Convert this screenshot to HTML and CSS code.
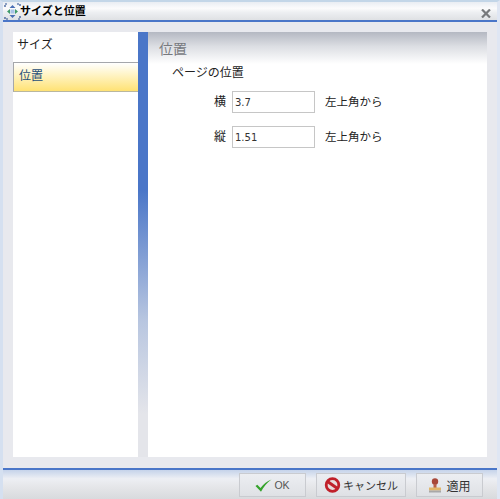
FILE: index.html
```html
<!DOCTYPE html>
<html lang="ja">
<head>
<meta charset="utf-8">
<title>サイズと位置</title>
<link rel="stylesheet" href="styles.css">
</head>
<body>
<div class="dialog">
  <header class="titlebar">
    <svg class="title-icon" width="17" height="17" viewBox="0 0 17 17">
      <path d="M1 4V1h3M13 1h3v3M16 13v3h-3M4 16H1v-3" fill="none" stroke="#2b4f8f" stroke-width="1.200" stroke-dasharray="2 1"/>
      <path d="M8.500 2l3 3h-6zM8.500 15l-3-3h6z" fill="#4a6fb5"/>
      <path d="M3 8.500l3-2.500v5zM14 8.500l-3 2.500V6z" fill="#3f9a6a"/>
      <rect x="6.500" y="6.500" width="4" height="4" fill="#a9c4e8"/>
    </svg>
    <span class="title-text">サイズと位置</span>
    <svg class="close" width="10" height="9" viewBox="0 0 10 9">
      <path d="M1 .5l8 8M9 .5l-8 8" stroke="#77797c" stroke-width="2.200" fill="none"/>
    </svg>
  </header>
  <main class="body">
    <nav class="sidebar">
      <div class="nav-item">サイズ</div>
      <div class="nav-item selected">位置</div>
    </nav>
    <div class="splitter"></div>
    <section class="content">
      <h2 class="content-head">位置</h2>
      <div class="group-label">ページの位置</div>
      <div class="row">
        <label class="row-label">横</label>
        <input class="field" value="3.7">
        <span class="row-note">左上角から</span>
      </div>
      <div class="row">
        <label class="row-label">縦</label>
        <input class="field" value="1.51">
        <span class="row-note">左上角から</span>
      </div>
    </section>
  </main>
  <footer class="footer">
    <button class="btn btn-ok">
      <svg width="17" height="13" viewBox="0 0 17 13"><path d="M.5 7l1.800-1.200L5.500 9C8 5.500 12 2 16.500.5 12 3.500 8.500 8 6 12.800z" fill="#35a32c"/></svg>
      <span class="ok-text">OK</span>
    </button>
    <button class="btn btn-cancel">
      <svg width="17" height="16" viewBox="0 0 17 16"><circle cx="8.500" cy="8" r="6.300" fill="#e8dcdc" stroke="#c0202a" stroke-width="2.800"/><path d="M3.500 4.500l10 7" stroke="#c0202a" stroke-width="3"/></svg>
      <span class="cancel-text">キャンセル</span>
    </button>
    <button class="btn btn-apply">
      <svg width="14" height="15" viewBox="0 0 14 15"><circle cx="7" cy="3.500" r="3.200" fill="#a8483a"/><rect x="5.500" y="6" width="3" height="4" fill="#b8604a"/><rect x="1" y="9.500" width="12" height="3" fill="#e2b66a"/><rect x="1" y="12.500" width="12" height="2" fill="#a8a8a8"/></svg>
      <span>適用</span>
    </button>
  </footer>
</div>
</body>
</html>
```
FILE: styles.css
```css
* { box-sizing: border-box; }
html, body { margin: 0; height: 100%; }
body {
  font-family: "Noto Sans CJK JP", "Liberation Sans", sans-serif;
  overflow: hidden;
}
.dialog {
  width: 500px;
  height: 499px;
  display: flex;
  flex-direction: column;
  background: #e8e9ee;
  border-top: 2px solid #c3d6e8;
  border-left: 3px solid #d5e0f0;
  border-right: 3px solid #dfe6f3;
}
.titlebar {
  height: 18px;
  flex: none;
  display: flex;
  align-items: center;
  background: linear-gradient(#e9edf3 0, #fbfbfc 35%, #eceef1 60%, #dfe1e4 100%);
  position: relative;
}
.title-icon { margin-left: 1px; flex: none; }
.title-text {
  font-size: 11px;
  font-weight: 700;
  color: #000;
  margin-left: -1px;
  line-height: 14px;
  transform: translateY(-1px);
}
.close { position: absolute; right: 6px; top: 7px; }
.body {
  flex: 1;
  display: flex;
  border-top: 2px solid #4a76c8;
  padding: 10px 10px 11px 10px;
  min-height: 0;
}
.sidebar {
  width: 125px;
  flex: none;
  background: #fff;
}
.nav-item {
  height: 29px;
  font-size: 12px;
  color: #222;
  padding: 4px 0 0 4px;
  line-height: 16px;
}
.nav-item.selected {
  height: 30px;
  margin-top: 1px;
  padding: 4px 0 0 5px;
  color: #1f4f7a;
  border-top: 1px solid #a5a7ab;
  border-left: 1px solid #a5a7ab;
  background: linear-gradient(#fff 0, #fff6cf 35%, #ffe274 100%);
  border-bottom: 1px solid #b9b79f;
}
.splitter {
  width: 10px;
  flex: none;
  background: linear-gradient(#4a76c8 0, #4a76c8 37%, #b8c6e0 68%, #e4e5ea 90%);
}
.content {
  flex: 1;
  background: #fff;
  min-width: 0;
}
.content-head {
  margin: 0;
  height: 32px;
  padding: 6px 0 0 11px;
  font-size: 14px;
  font-weight: 400;
  line-height: 20px;
  color: #77797e;
  background: linear-gradient(#b4b8c2 0, #dcdee3 45%, #fff 100%);
}
.group-label {
  font-size: 12px;
  line-height: 16px;
  color: #222;
  padding-left: 24px;
}
.row {
  display: flex;
  align-items: center;
  height: 22px;
  margin-top: 13px;
}
.group-label + .row { margin-top: 11px; }
.row-label {
  width: 78px;
  text-align: right;
  font-size: 12px;
  color: #222;
  line-height: 20px;
  align-self: flex-start;
}
.field {
  width: 83px;
  height: 22px;
  margin-left: 6px;
  padding: 0 0 0 2px;
  border: 1px solid #c6c6c6;
  font-family: "DejaVu Sans", sans-serif;
  font-size: 10px;
  color: #333;
  background: #fff;
}
.row-note {
  font-size: 11.500px;
  color: #222;
  margin-left: 10px;
  line-height: 20px;
  align-self: flex-start;
}
.footer {
  height: 31px;
  flex: none;
  display: flex;
  justify-content: flex-end;
  gap: 10px;
  padding: 3px 14px 0 0;
  background: linear-gradient(#c5d3ea 0, #edeff4 30%, #e6e7ea 55%, #d8dadd 100%);
  border-top: 2px solid #4a76c8;
}
.btn {
  height: 24px;
  display: flex;
  align-items: center;
  justify-content: center;
  gap: 2px;
  padding: 0;
  font-family: "Noto Sans CJK JP", "Liberation Sans", sans-serif;
  font-size: 12px;
  color: #333;
  background: linear-gradient(#eceef2, #dfe1e5);
  border: 1px solid #c9cbd0;
}
.btn-ok { width: 67px; }
.btn-cancel { width: 90px; }
.btn-apply { width: 67px; gap: 4px; }
.cancel-text { font-size: 11px; }
.ok-text { font-family: "Liberation Sans", sans-serif; font-size: 10.500px; color: #555; }
```
